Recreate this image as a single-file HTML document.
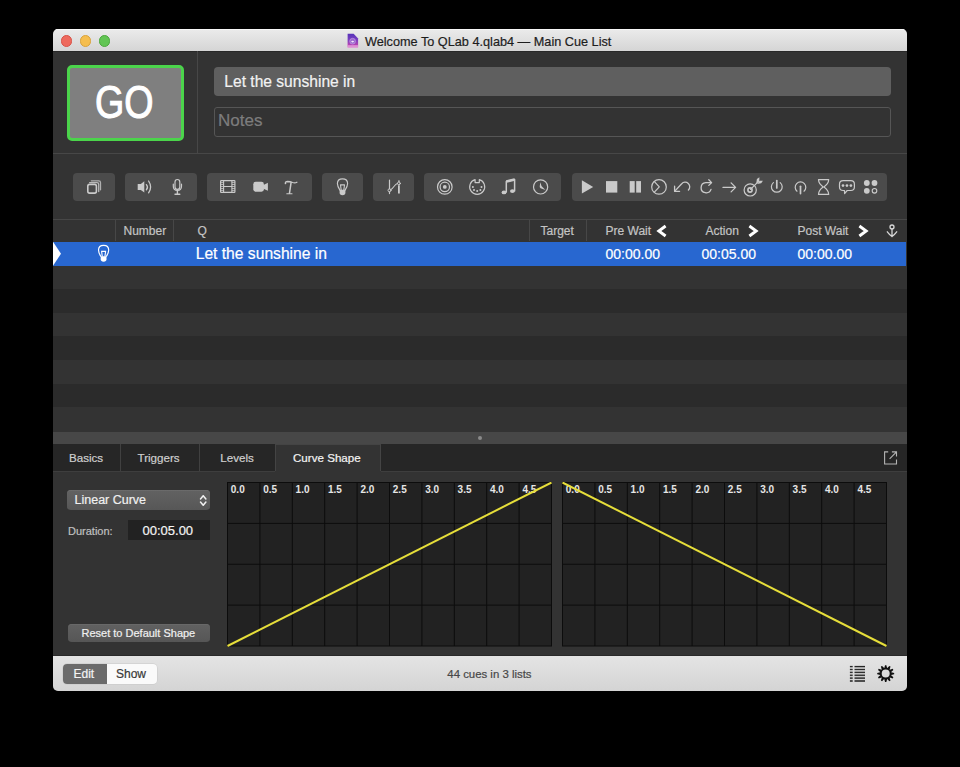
<!DOCTYPE html>
<html><head><meta charset="utf-8">
<style>
*{box-sizing:border-box;margin:0;padding:0}
html,body{width:960px;height:767px;background:#000;overflow:hidden}
body{font-family:"Liberation Sans",sans-serif;position:relative}
.a{position:absolute}
#win{left:53px;top:29px;width:854px;height:662px;background:#333;border-radius:5px;overflow:hidden}
#tb{left:0;top:0;width:854px;height:22.4px;background:linear-gradient(#ebebeb,#d5d5d5);box-shadow:inset 0 1px 0 #f7f7f7,0 0.8px 0 #262626}
.tl{width:11.6px;height:11.6px;border-radius:50%;top:6.2px}
.t{white-space:pre;line-height:1;-webkit-text-stroke:0.2px currentColor}
.grp{background:#4b4b4b;border-radius:4px;top:144px;height:28px}
.hd{color:#c4c4c4;font-size:12px;top:195.5px}
.row{left:0;width:854px;height:24px}
.tab{top:415px;height:27px;color:#c8c8c8;font-size:11.6px;background:#262626}
.ts{top:415px;width:1px;height:27px;background:#404040}
#bb{left:0;top:626.5px;width:854px;height:35.5px;background:linear-gradient(#e4e4e4,#d4d4d4);box-shadow:0 -1px 0 #292929}
.ic{position:absolute}
</style></head><body>
<div id="win" class="a">
  <!-- title bar -->
  <div id="tb" class="a">
    <div class="a tl" style="left:7.7px;background:#ee6a5e;border:0.5px solid #d85046"></div>
    <div class="a tl" style="left:26.8px;background:#f5be4f;border:0.5px solid #d9a23a"></div>
    <div class="a tl" style="left:45.6px;background:#62c554;border:0.5px solid #4aa73c"></div>
    <svg class="a" style="left:294px;top:4px" width="12" height="15" viewBox="347 33 12 15">
      <defs><linearGradient id="fg" x1="0" y1="0" x2="0" y2="1"><stop offset="0" stop-color="#5633b8"/><stop offset="0.45" stop-color="#7a3fc0"/><stop offset="0.8" stop-color="#b243b4"/><stop offset="1" stop-color="#e08ad2"/></linearGradient></defs>
      <path d="M347.6 33.7H353.6L358.1 38.4V47.5H347.6Z" fill="url(#fg)"/>
      <rect x="347.6" y="45.2" width="10.5" height="2.3" fill="#de90d4"/>
      <circle cx="352.6" cy="41.2" r="2.9" fill="#9c6bcf"/>
      <circle cx="352.6" cy="41.2" r="2.9" fill="none" stroke="#c9a4e6" stroke-width="0.6"/>
      <ellipse cx="352.6" cy="41.6" rx="1.4" ry="0.8" fill="#f4e4fa"/>
    </svg>
    <div class="a t" style="left:312px;top:6.5px;font-size:12.7px;color:#1d1d1d">Welcome To QLab 4.qlab4 — Main Cue List</div>
  </div>

  <!-- upper area -->
  <div class="a" style="left:13.5px;top:35.5px;width:117px;height:76px;background:#7f7f7f;border:3px solid #4bd44b;border-radius:5px"></div>
  <div class="a t" style="left:42.2px;top:49.2px;font-size:47px;color:#fff;-webkit-text-stroke:1.1px #fff;transform:scaleX(0.8);transform-origin:0 0">GO</div>
  <div class="a" style="left:144px;top:22px;width:1px;height:102px;background:#474747"></div>
  <div class="a" style="left:0;top:124px;width:854px;height:1px;background:#474747"></div>
  <div class="a" style="left:160.5px;top:38px;width:677px;height:29px;background:#5f5f5f;border-radius:4px"></div>
  <div class="a t" style="left:171.3px;top:45px;font-size:15.6px;color:#f2f2f2">Let the sunshine in</div>
  <div class="a" style="left:160.5px;top:78px;width:677px;height:30px;border:1px solid #565656;border-radius:3px"></div>
  <div class="a t" style="left:165px;top:83px;font-size:17px;color:#7d7d7d">Notes</div>

  <!-- toolbar groups -->
  <div class="a grp" style="left:20.3px;width:41.7px"></div>
  <div class="a grp" style="left:71.5px;width:72.7px"></div>
  <div class="a grp" style="left:154px;width:105px"></div>
  <div class="a grp" style="left:269px;width:41.2px"></div>
  <div class="a grp" style="left:320.2px;width:41.1px"></div>
  <div class="a grp" style="left:371.2px;width:137.2px"></div>
  <div class="a grp" style="left:518.5px;width:315.1px"></div>

  <!-- header -->
  <div class="a" style="left:0;top:190px;width:854px;height:1px;background:#474747"></div>
  <div class="a" style="left:62px;top:191px;width:1px;height:21px;background:#474747"></div>
  <div class="a" style="left:120px;top:191px;width:1px;height:21px;background:#474747"></div>
  <div class="a" style="left:476px;top:191px;width:1px;height:21px;background:#474747"></div>
  <div class="a" style="left:533px;top:191px;width:1px;height:21px;background:#474747"></div>
  <div class="a t hd" style="left:70.5px">Number</div>
  <div class="a t hd" style="left:144.5px">Q</div>
  <div class="a t hd" style="left:487.5px">Target</div>
  <div class="a t hd" style="left:552.5px">Pre Wait</div>
  <div class="a t hd" style="left:652.5px">Action</div>
  <div class="a t hd" style="left:744.5px">Post Wait</div>

  <!-- rows -->
  <div class="a row" style="top:212.6px;height:24.2px;width:853px;background:#2867d0"></div>
  <div class="a row" style="top:236.80px;height:23.55px;background:#333"></div>
  <div class="a row" style="top:260.35px;height:23.55px;background:#2b2b2b"></div>
  <div class="a row" style="top:283.90px;height:23.55px;background:#333"></div>
  <div class="a row" style="top:307.45px;height:23.55px;background:#2b2b2b"></div>
  <div class="a row" style="top:331.00px;height:23.55px;background:#333"></div>
  <div class="a row" style="top:354.55px;height:23.55px;background:#2b2b2b"></div>
  <div class="a row" style="top:378.10px;height:24.90px;background:#333"></div>
  <div class="a t" style="left:142.7px;top:216.6px;font-size:15.65px;color:#fff">Let the sunshine in</div>
  <div class="a t" style="left:552.5px;top:217.6px;font-size:14px;color:#fff">00:00.00</div>
  <div class="a t" style="left:648.5px;top:217.6px;font-size:14px;color:#fff">00:05.00</div>
  <div class="a t" style="left:744.5px;top:217.6px;font-size:14px;color:#fff">00:00.00</div>

  <!-- divider -->
  <div class="a" style="left:0;top:403px;width:854px;height:12px;background:#474747"></div>
  <div class="a" style="left:425px;top:407px;width:4px;height:4px;border-radius:50%;background:#8a8a8a"></div>

  <!-- tabs -->
  <div class="a tab" style="left:0;width:67px"></div>
  <div class="a tab" style="left:68px;width:78px"></div>
  <div class="a tab" style="left:147px;width:75px"></div>
  <div class="a tab" style="left:328px;width:526px"></div>
  <div class="a ts" style="left:67px"></div>
  <div class="a ts" style="left:146px"></div>
  <div class="a t" style="left:16px;top:422.7px;font-size:11.6px;color:#cfcfcf">Basics</div>
  <div class="a t" style="left:84.5px;top:422.7px;font-size:11.6px;color:#cfcfcf">Triggers</div>
  <div class="a t" style="left:167.3px;top:422.7px;font-size:11.6px;color:#cfcfcf">Levels</div>
  <div class="a t" style="left:240px;top:422.7px;font-size:11.6px;color:#f4f4f4">Curve Shape</div>
  <div class="a" style="left:0;top:441.5px;width:222px;height:1px;background:#3e3e3e"></div>
  <div class="a" style="left:328px;top:441.5px;width:526px;height:1px;background:#3e3e3e"></div>
  <div class="a" style="left:222px;top:415px;width:106px;height:27px;border:1px solid #444;border-bottom:0"></div>

  <!-- panel -->
  <div class="a" style="left:13.7px;top:461px;width:143px;height:20px;background:linear-gradient(#626262,#575757);border-radius:4px;box-shadow:inset 0 0.5px 0 #747474"></div>
  <div class="a t" style="left:21.5px;top:465px;font-size:12.5px;color:#f0f0f0">Linear Curve</div>
  <div class="a t" style="left:15px;top:497px;font-size:11px;color:#c0c0c0">Duration:</div>
  <div class="a" style="left:75px;top:491.3px;width:81.7px;height:19.4px;background:#222"></div>
  <div class="a t" style="left:89.5px;top:495px;font-size:13px;color:#f4f4f4">00:05.00</div>
  <div class="a" style="left:14.5px;top:595.2px;width:142.2px;height:17.5px;background:linear-gradient(#616161,#565656);border-radius:4px;box-shadow:inset 0 0.5px 0 #707070"></div>
  <div class="a t" style="left:28.5px;top:599px;font-size:11px;color:#f0f0f0">Reset to Default Shape</div>

  <!-- graphs -->
  <svg class="a" style="left:174px;top:453px" width="325" height="164.5" viewBox="0 0 325 164.5"><rect x="0" y="0" width="325" height="164.5" fill="#0c0c0c"/><rect x="1.00" y="1.00" width="31.40" height="39.88" fill="#222"/><rect x="33.40" y="1.00" width="31.40" height="39.88" fill="#222"/><rect x="65.80" y="1.00" width="31.40" height="39.88" fill="#222"/><rect x="98.20" y="1.00" width="31.40" height="39.88" fill="#222"/><rect x="130.60" y="1.00" width="31.40" height="39.88" fill="#222"/><rect x="163.00" y="1.00" width="31.40" height="39.88" fill="#222"/><rect x="195.40" y="1.00" width="31.40" height="39.88" fill="#222"/><rect x="227.80" y="1.00" width="31.40" height="39.88" fill="#222"/><rect x="260.20" y="1.00" width="31.40" height="39.88" fill="#222"/><rect x="292.60" y="1.00" width="31.40" height="39.88" fill="#222"/><rect x="1.00" y="41.88" width="31.40" height="39.88" fill="#222"/><rect x="33.40" y="41.88" width="31.40" height="39.88" fill="#222"/><rect x="65.80" y="41.88" width="31.40" height="39.88" fill="#222"/><rect x="98.20" y="41.88" width="31.40" height="39.88" fill="#222"/><rect x="130.60" y="41.88" width="31.40" height="39.88" fill="#222"/><rect x="163.00" y="41.88" width="31.40" height="39.88" fill="#222"/><rect x="195.40" y="41.88" width="31.40" height="39.88" fill="#222"/><rect x="227.80" y="41.88" width="31.40" height="39.88" fill="#222"/><rect x="260.20" y="41.88" width="31.40" height="39.88" fill="#222"/><rect x="292.60" y="41.88" width="31.40" height="39.88" fill="#222"/><rect x="1.00" y="82.75" width="31.40" height="39.88" fill="#222"/><rect x="33.40" y="82.75" width="31.40" height="39.88" fill="#222"/><rect x="65.80" y="82.75" width="31.40" height="39.88" fill="#222"/><rect x="98.20" y="82.75" width="31.40" height="39.88" fill="#222"/><rect x="130.60" y="82.75" width="31.40" height="39.88" fill="#222"/><rect x="163.00" y="82.75" width="31.40" height="39.88" fill="#222"/><rect x="195.40" y="82.75" width="31.40" height="39.88" fill="#222"/><rect x="227.80" y="82.75" width="31.40" height="39.88" fill="#222"/><rect x="260.20" y="82.75" width="31.40" height="39.88" fill="#222"/><rect x="292.60" y="82.75" width="31.40" height="39.88" fill="#222"/><rect x="1.00" y="123.62" width="31.40" height="39.88" fill="#222"/><rect x="33.40" y="123.62" width="31.40" height="39.88" fill="#222"/><rect x="65.80" y="123.62" width="31.40" height="39.88" fill="#222"/><rect x="98.20" y="123.62" width="31.40" height="39.88" fill="#222"/><rect x="130.60" y="123.62" width="31.40" height="39.88" fill="#222"/><rect x="163.00" y="123.62" width="31.40" height="39.88" fill="#222"/><rect x="195.40" y="123.62" width="31.40" height="39.88" fill="#222"/><rect x="227.80" y="123.62" width="31.40" height="39.88" fill="#222"/><rect x="260.20" y="123.62" width="31.40" height="39.88" fill="#222"/><rect x="292.60" y="123.62" width="31.40" height="39.88" fill="#222"/><text x="3.80" y="11.2" font-family="Liberation Sans" font-weight="700" font-size="10" fill="#e6e6e6">0.0</text><text x="36.20" y="11.2" font-family="Liberation Sans" font-weight="700" font-size="10" fill="#e6e6e6">0.5</text><text x="68.60" y="11.2" font-family="Liberation Sans" font-weight="700" font-size="10" fill="#e6e6e6">1.0</text><text x="101.00" y="11.2" font-family="Liberation Sans" font-weight="700" font-size="10" fill="#e6e6e6">1.5</text><text x="133.40" y="11.2" font-family="Liberation Sans" font-weight="700" font-size="10" fill="#e6e6e6">2.0</text><text x="165.80" y="11.2" font-family="Liberation Sans" font-weight="700" font-size="10" fill="#e6e6e6">2.5</text><text x="198.20" y="11.2" font-family="Liberation Sans" font-weight="700" font-size="10" fill="#e6e6e6">3.0</text><text x="230.60" y="11.2" font-family="Liberation Sans" font-weight="700" font-size="10" fill="#e6e6e6">3.5</text><text x="263.00" y="11.2" font-family="Liberation Sans" font-weight="700" font-size="10" fill="#e6e6e6">4.0</text><text x="295.40" y="11.2" font-family="Liberation Sans" font-weight="700" font-size="10" fill="#e6e6e6">4.5</text><line x1="0.5" y1="164" x2="324.5" y2="0.5" stroke="#e6de3a" stroke-width="2"/></svg>
  <svg class="a" style="left:508.5px;top:453px" width="325" height="164.5" viewBox="0 0 325 164.5"><rect x="0" y="0" width="325" height="164.5" fill="#0c0c0c"/><rect x="1.00" y="1.00" width="31.40" height="39.88" fill="#222"/><rect x="33.40" y="1.00" width="31.40" height="39.88" fill="#222"/><rect x="65.80" y="1.00" width="31.40" height="39.88" fill="#222"/><rect x="98.20" y="1.00" width="31.40" height="39.88" fill="#222"/><rect x="130.60" y="1.00" width="31.40" height="39.88" fill="#222"/><rect x="163.00" y="1.00" width="31.40" height="39.88" fill="#222"/><rect x="195.40" y="1.00" width="31.40" height="39.88" fill="#222"/><rect x="227.80" y="1.00" width="31.40" height="39.88" fill="#222"/><rect x="260.20" y="1.00" width="31.40" height="39.88" fill="#222"/><rect x="292.60" y="1.00" width="31.40" height="39.88" fill="#222"/><rect x="1.00" y="41.88" width="31.40" height="39.88" fill="#222"/><rect x="33.40" y="41.88" width="31.40" height="39.88" fill="#222"/><rect x="65.80" y="41.88" width="31.40" height="39.88" fill="#222"/><rect x="98.20" y="41.88" width="31.40" height="39.88" fill="#222"/><rect x="130.60" y="41.88" width="31.40" height="39.88" fill="#222"/><rect x="163.00" y="41.88" width="31.40" height="39.88" fill="#222"/><rect x="195.40" y="41.88" width="31.40" height="39.88" fill="#222"/><rect x="227.80" y="41.88" width="31.40" height="39.88" fill="#222"/><rect x="260.20" y="41.88" width="31.40" height="39.88" fill="#222"/><rect x="292.60" y="41.88" width="31.40" height="39.88" fill="#222"/><rect x="1.00" y="82.75" width="31.40" height="39.88" fill="#222"/><rect x="33.40" y="82.75" width="31.40" height="39.88" fill="#222"/><rect x="65.80" y="82.75" width="31.40" height="39.88" fill="#222"/><rect x="98.20" y="82.75" width="31.40" height="39.88" fill="#222"/><rect x="130.60" y="82.75" width="31.40" height="39.88" fill="#222"/><rect x="163.00" y="82.75" width="31.40" height="39.88" fill="#222"/><rect x="195.40" y="82.75" width="31.40" height="39.88" fill="#222"/><rect x="227.80" y="82.75" width="31.40" height="39.88" fill="#222"/><rect x="260.20" y="82.75" width="31.40" height="39.88" fill="#222"/><rect x="292.60" y="82.75" width="31.40" height="39.88" fill="#222"/><rect x="1.00" y="123.62" width="31.40" height="39.88" fill="#222"/><rect x="33.40" y="123.62" width="31.40" height="39.88" fill="#222"/><rect x="65.80" y="123.62" width="31.40" height="39.88" fill="#222"/><rect x="98.20" y="123.62" width="31.40" height="39.88" fill="#222"/><rect x="130.60" y="123.62" width="31.40" height="39.88" fill="#222"/><rect x="163.00" y="123.62" width="31.40" height="39.88" fill="#222"/><rect x="195.40" y="123.62" width="31.40" height="39.88" fill="#222"/><rect x="227.80" y="123.62" width="31.40" height="39.88" fill="#222"/><rect x="260.20" y="123.62" width="31.40" height="39.88" fill="#222"/><rect x="292.60" y="123.62" width="31.40" height="39.88" fill="#222"/><text x="3.80" y="11.2" font-family="Liberation Sans" font-weight="700" font-size="10" fill="#e6e6e6">0.0</text><text x="36.20" y="11.2" font-family="Liberation Sans" font-weight="700" font-size="10" fill="#e6e6e6">0.5</text><text x="68.60" y="11.2" font-family="Liberation Sans" font-weight="700" font-size="10" fill="#e6e6e6">1.0</text><text x="101.00" y="11.2" font-family="Liberation Sans" font-weight="700" font-size="10" fill="#e6e6e6">1.5</text><text x="133.40" y="11.2" font-family="Liberation Sans" font-weight="700" font-size="10" fill="#e6e6e6">2.0</text><text x="165.80" y="11.2" font-family="Liberation Sans" font-weight="700" font-size="10" fill="#e6e6e6">2.5</text><text x="198.20" y="11.2" font-family="Liberation Sans" font-weight="700" font-size="10" fill="#e6e6e6">3.0</text><text x="230.60" y="11.2" font-family="Liberation Sans" font-weight="700" font-size="10" fill="#e6e6e6">3.5</text><text x="263.00" y="11.2" font-family="Liberation Sans" font-weight="700" font-size="10" fill="#e6e6e6">4.0</text><text x="295.40" y="11.2" font-family="Liberation Sans" font-weight="700" font-size="10" fill="#e6e6e6">4.5</text><line x1="0.5" y1="0.5" x2="324.5" y2="164" stroke="#e6de3a" stroke-width="2"/></svg>

  <!-- bottom bar -->
  <div id="bb" class="a"></div>
  <div class="a" style="left:10.2px;top:635px;width:94px;height:19.8px;border-radius:4px;background:#fafafa;box-shadow:0 0 0 0.5px #c8c8c8"></div>
  <div class="a" style="left:10.2px;top:635px;width:44px;height:19.8px;border-radius:4px 0 0 4px;background:#6b6b6b"></div>
  <div class="a t" style="left:20.5px;top:638.8px;font-size:12px;color:#f4f4f4">Edit</div>
  <div class="a t" style="left:63px;top:638.8px;font-size:12px;color:#383838">Show</div>
  <div class="a t" style="left:394.3px;top:639.7px;font-size:11.4px;color:#484848">44 cues in 3 lists</div>
</div>
<svg class="a" style="left:0;top:0" width="960" height="767" viewBox="0 0 960 767">
 <g fill="none" stroke="#cacaca" stroke-width="1.4" stroke-linecap="round" stroke-linejoin="round">
  <!-- stack -->
  <rect x="87.8" y="184.4" width="8.6" height="8.7" rx="1.8" stroke-width="1.6"/>
  <path d="M89.6 182.6H97q1.7 0 1.7 1.7V191.6" stroke="#b8b8b8" stroke-width="1.3"/>
  <path d="M91.3 180.8H98.8q1.7 0 1.7 1.7V189.8" stroke="#b0b0b0" stroke-width="1.3"/>
  <!-- speaker -->
  <path d="M137.7 184H140.8L144.3 181.3V192.4L140.8 190H137.7Z" fill="#cacaca" stroke="none"/>
  <path d="M146.4 184.6Q148.6 187.2 146.4 189.7" stroke-width="1.3"/>
  <path d="M148.6 181Q152.6 187 148.6 192.8" stroke-width="1.3"/>
  <!-- mic -->
  <rect x="175" y="179.5" width="4.8" height="9.8" rx="2.4" stroke-width="1.2"/>
  <path d="M173.3 184.2V186.2Q173.3 190.3 177.4 190.3Q181.5 190.3 181.5 186.2V184.2" stroke-width="1.2"/>
  <path d="M177.4 190.3V193.8M175 194.2H179.8" stroke-width="1.4"/>
  <!-- film -->
  <rect x="220.6" y="180.7" width="14.3" height="11.6" rx="0.6" stroke-width="1.2"/>
  <path d="M223.6 180.7V192.3M231.9 180.7V192.3M223.6 186.5H231.9" stroke-width="1.1"/>
  <path d="M220.6 182.6h3M220.6 184.5h3M220.6 186.5h3M220.6 188.5h3M220.6 190.4h3M231.9 182.6h3M231.9 184.5h3M231.9 186.5h3M231.9 188.5h3M231.9 190.4h3" stroke-width="0.8" stroke-linecap="butt"/>
  <!-- camera -->
  <rect x="253.3" y="181.8" width="10.6" height="9.9" rx="2.4" fill="#cacaca" stroke="none"/>
  <path d="M263 185.2L267.9 182.8V190.8L263 188.4Z" fill="#cacaca" stroke="none"/>
  <!-- bulb -->
  <path d="M339.90 190.10C338.40 187.90 337.40 185.90 337.40 183.60C337.40 180.50 339.70 178.80 342.50 178.80C345.30 178.80 347.60 180.50 347.60 183.60C347.60 185.90 346.60 187.90 345.10 190.10" fill="none" stroke="#cacaca" stroke-width="1.15"/><path d="M341.20 190.10L340.50 184.90H344.50L343.80 190.10" fill="none" stroke="#cacaca" stroke-width="1.1"/><path d="M339.60 189.80H345.40V192.80Q345.40 195.20 342.50 195.20Q339.60 195.20 339.60 192.80Z" fill="#cacaca" stroke="none"/>
  <!-- fade -->
  <path d="M389.5 180.2V188.8M389.5 191.8V193.6" stroke-width="1.2"/>
  <circle cx="389.5" cy="190.3" r="1.5" stroke-width="1"/>
  <path d="M390.9 189.6C392.6 188.8 393.3 187.2 394.3 186C395.5 184.4 396.6 183.7 397.4 183.5" stroke-width="1.1"/>
  <path d="M398.9 180.6V181.7M398.9 185.2V193.6" stroke-width="1.8" stroke-linecap="butt"/>
  <circle cx="398.9" cy="183.4" r="1.4" stroke-width="1"/>
  <!-- network -->
  <circle cx="444.8" cy="186.9" r="7.3" stroke-width="1.2"/>
  <circle cx="444.8" cy="186.9" r="4.7" stroke-width="1.2"/>
  <circle cx="444.8" cy="186.9" r="1.9" fill="#cacaca" stroke="none"/>
  <!-- midi -->
  <path d="M475.1 179.6A7.5 7.5 0 1 0 479.3 179.6V182.6H475.1Z" stroke-width="1.2"/>
  <g fill="#cacaca" stroke="none"><circle cx="472.9" cy="186.9" r="1"/><circle cx="481.5" cy="186.9" r="1"/><circle cx="474" cy="190" r="1"/><circle cx="480.4" cy="190" r="1"/><circle cx="477.2" cy="191.1" r="1"/></g>
  <!-- note -->
  <path d="M506.3 192V181.5L514.6 179.5V191" stroke-width="1.5"/>
  <path d="M506.3 181.5L514.6 179.5" stroke-width="2.6" stroke-linecap="butt"/>
  <g fill="#cacaca" stroke="none"><ellipse cx="504" cy="192.4" rx="2.4" ry="1.9"/><ellipse cx="512.4" cy="191.1" rx="2.4" ry="1.9"/></g>
  <!-- clock -->
  <circle cx="540.6" cy="186.9" r="7.1" stroke-width="1.2"/>
  <path d="M540.4 182.2L541.5 186.1L545.4 189.9L540.6 188.2Q539.5 187.5 539.7 186.3Z" fill="#cacaca" stroke="none"/>
  <!-- play stop pause -->
  <path d="M581.9 180.2L593.2 186.9L581.9 193.6Z" fill="#cacaca" stroke="none"/>
  <rect x="606" y="181.1" width="11.3" height="11.5" fill="#cacaca" stroke="none"/>
  <rect x="629.7" y="181.1" width="5" height="11.5" fill="#cacaca" stroke="none"/>
  <rect x="636.2" y="181.1" width="4.8" height="11.5" fill="#cacaca" stroke="none"/>
  <!-- load -->
  <circle cx="659" cy="186.9" r="7.3" stroke-width="1.2"/>
  <path d="M654.4 181.7L659.3 186.9L654.4 192.1" stroke-width="1.2"/>
  <!-- back arrow -->
  <path d="M688.4 190A4.6 4.6 0 1 0 681.7 183.7L674.8 191.1" stroke-width="1.3"/>
  <path d="M674.6 186.2V191.3H679.6" stroke-width="1.3"/>
  <!-- redo -->
  <path d="M711 189.4A5.1 5.1 0 1 1 705.7 182.6H711.2" stroke-width="1.3"/>
  <path d="M708.8 179.8L711.6 182.6L708.8 185.4" stroke-width="1.3"/>
  <!-- arrow -->
  <path d="M723 187.4H735.4M731.1 182.9L735.6 187.4L731.1 191.9" stroke-width="1.3"/>
  <!-- target -->
  <circle cx="750.2" cy="189.9" r="6.1" stroke-width="1.2"/>
  <circle cx="750" cy="190" r="2.1" stroke-width="1.6"/>
  <path d="M750.5 189.4L758.5 181.4" stroke-width="1.2"/>
  <path d="M756.3 183.2L756.9 179L759.4 177.2L759.3 180.5Z" fill="#cacaca" stroke="none"/>
  <path d="M757 184L761.2 183.3L762.9 180.7L759.6 180.8Z" fill="#cacaca" stroke="none"/>
  <!-- power -->
  <path d="M773.4 182.6A5.4 5.4 0 1 0 780.2 182.6" stroke-width="1.2"/>
  <path d="M776.8 180.5V187.9" stroke-width="1.7"/>
  <!-- arm -->
  <path d="M797 191.2A5.3 5.3 0 1 1 804 191.2" stroke-width="1.2"/>
  <path d="M800.5 186.3V193.6" stroke-width="1.7"/>
  <!-- hourglass -->
  <path d="M818.5 179.6H828.7Q828.6 183.8 823.9 187Q828.6 190.2 828.7 194.4H818.5Q818.6 190.2 823.2 187Q818.6 183.8 818.5 179.6Z" stroke-width="1.2"/>
  <!-- speech -->
  <path d="M843.2 180.7H850.8Q854.4 180.7 854.4 184.3V187Q854.4 190.5 850.8 190.5H847.2L844.6 193.6L844.5 190.5H843.2Q839.5 190.5 839.5 187V184.3Q839.5 180.7 843.2 180.7Z" stroke-width="1.2"/>
  <g fill="#cacaca" stroke="none"><circle cx="843" cy="185.6" r="1.35"/><circle cx="846.95" cy="185.6" r="1.35"/><circle cx="850.9" cy="185.6" r="1.35"/></g>
  <!-- dots -->
  <g fill="#cacaca" stroke="none"><circle cx="866.8" cy="183" r="2.9"/><circle cx="874.5" cy="183" r="2.9"/><circle cx="866.8" cy="190.8" r="2.9"/></g>
  <circle cx="874.5" cy="190.8" r="2.3" stroke-width="1.1"/>
 </g>
 <!-- T glyph -->
 <g fill="none" stroke="#cacaca" stroke-linecap="round">
  <path d="M285.4 183.6Q285 181.6 287.6 181.5Q290.2 181.5 292.6 182.5Q295 183.4 296.9 182.3" stroke-width="1.3"/>
  <circle cx="285.6" cy="183.2" r="0.8" fill="#cacaca" stroke="none"/>
  <path d="M291.1 182.4L289.5 193.2" stroke-width="1.5"/>
  <path d="M286.8 193.8H292" stroke-width="1.1"/>
 </g>
 <!-- row playhead & bulb -->
 <path d="M53 241.8L61 253.7L53 265.7Z" fill="#fff"/>
 <path d="M101.00 256.60C99.50 254.40 98.50 252.40 98.50 250.10C98.50 247.00 100.80 245.30 103.60 245.30C106.40 245.30 108.70 247.00 108.70 250.10C108.70 252.40 107.70 254.40 106.20 256.60" fill="none" stroke="#fff" stroke-width="1.15"/><path d="M102.30 256.60L101.60 251.40H105.60L104.90 256.60" fill="none" stroke="#fff" stroke-width="1.1"/><path d="M100.70 256.30H106.50V259.30Q106.50 261.70 103.60 261.70Q100.70 261.70 100.70 259.30Z" fill="#fff" stroke="none"/>
 <!-- header chevrons -->
 <g fill="none" stroke="#fff" stroke-width="2.9" stroke-linecap="butt" stroke-linejoin="miter" stroke-miterlimit="10">
  <path d="M665.6 226L658.8 231L665.6 236"/>
  <path d="M749.4 226L756.2 231L749.4 236"/>
  <path d="M859.4 226L866.2 231L859.4 236"/>
 </g>
 <!-- anchor -->
 <g fill="none" stroke="#d8d8d8" stroke-width="1.3" stroke-linecap="round">
  <circle cx="892" cy="227" r="2"/>
  <path d="M892 229V236.4M887.3 231.8Q889.5 234.6 892 236.6Q894.5 234.6 896.7 231.8"/>
 </g>
 <!-- popout -->
 <g fill="none" stroke="#b4b4b4" stroke-width="1.1" stroke-linecap="butt">
  <path d="M888.2 451.9H884.6V464H896.5V459.6"/>
  <path d="M889.6 458.9L896.3 452.2M891.9 451.9H896.5V456.5"/>
 </g>
 <!-- bottom icons -->
 <rect x="849.9" y="665.90" width="2.8" height="1.4" fill="#262626"/><rect x="854.5" y="665.90" width="10.5" height="1.4" fill="#262626"/><rect x="849.9" y="668.80" width="2.8" height="1.4" fill="#2b2b2b"/><rect x="854.5" y="668.80" width="10.5" height="1.4" fill="#2b2b2b"/><rect x="849.9" y="671.65" width="2.8" height="1.5" fill="#303030"/><rect x="854.5" y="671.65" width="10.5" height="1.5" fill="#303030"/><rect x="849.9" y="674.50" width="2.8" height="1.6" fill="#383838"/><rect x="854.5" y="674.50" width="10.5" height="1.6" fill="#383838"/><rect x="849.9" y="677.25" width="2.8" height="1.8" fill="#434343"/><rect x="854.5" y="677.25" width="10.5" height="1.8" fill="#434343"/><rect x="849.9" y="680.00" width="2.8" height="2.0" fill="#4d4d4d"/><rect x="854.5" y="680.00" width="10.5" height="2.0" fill="#4d4d4d"/>
 <path d="M884.32 668.07L885.03 665.13L886.37 665.13L887.08 668.07A5.7 5.7 0 0 1 887.27 668.12L887.27 668.12L889.36 665.93L890.51 666.59L889.66 669.50A5.7 5.7 0 0 1 889.80 669.64L889.80 669.64L892.71 668.79L893.37 669.94L891.18 672.03A5.7 5.7 0 0 1 891.23 672.22L891.23 672.22L894.17 672.93L894.17 674.27L891.23 674.98A5.7 5.7 0 0 1 891.18 675.17L891.18 675.17L893.37 677.26L892.71 678.41L889.80 677.56A5.7 5.7 0 0 1 889.66 677.70L889.66 677.70L890.51 680.61L889.36 681.27L887.27 679.08A5.7 5.7 0 0 1 887.08 679.13L887.08 679.13L886.37 682.07L885.03 682.07L884.32 679.13A5.7 5.7 0 0 1 884.13 679.08L884.13 679.08L882.04 681.27L880.89 680.61L881.74 677.70A5.7 5.7 0 0 1 881.60 677.56L881.60 677.56L878.69 678.41L878.03 677.26L880.22 675.17A5.7 5.7 0 0 1 880.17 674.98L880.17 674.98L877.23 674.27L877.23 672.93L880.17 672.22A5.7 5.7 0 0 1 880.22 672.03L880.22 672.03L878.03 669.94L878.69 668.79L881.60 669.64A5.7 5.7 0 0 1 881.74 669.50L881.74 669.50L880.89 666.59L882.04 665.93L884.13 668.12A5.7 5.7 0 0 1 884.32 668.07ZM889.70 673.60A4.0 4.0 0 1 0 881.70 673.60A4.0 4.0 0 1 0 889.70 673.60Z" fill="#111" fill-rule="evenodd"/>
 <!-- popup chevrons -->
 <path d="M200.5 499L203.2 495.7L205.9 499M200.5 502L203.2 505.3L205.9 502" fill="none" stroke="#f0f0f0" stroke-width="1.5" stroke-linecap="round" stroke-linejoin="round"/>
</svg>

</body></html>
